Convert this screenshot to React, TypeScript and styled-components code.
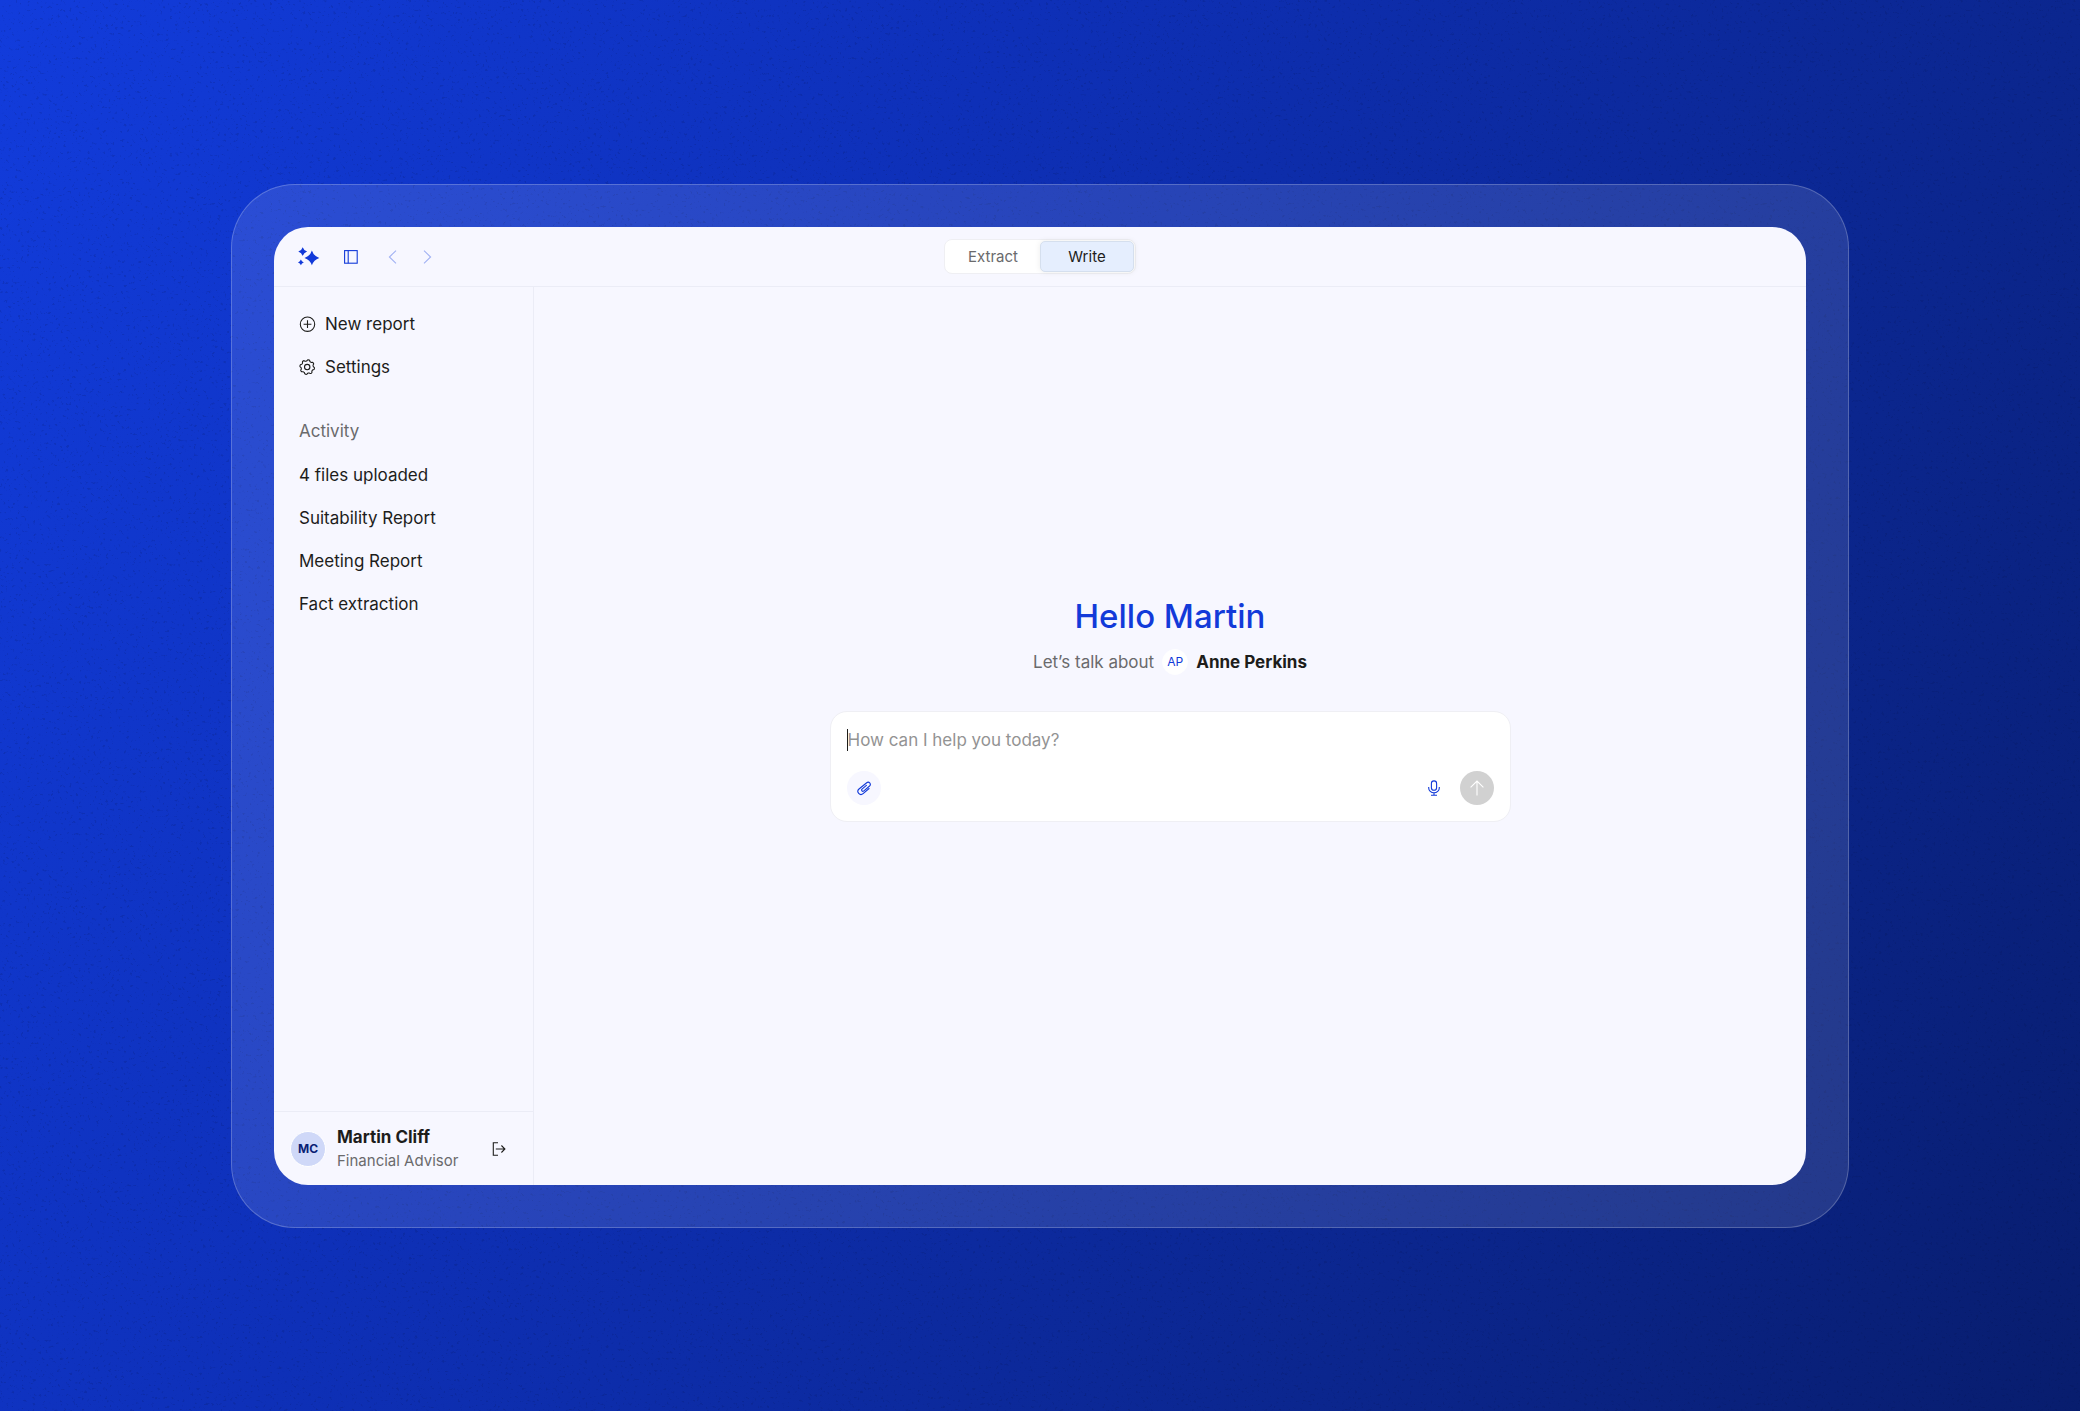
import React from "react";
import styled, { createGlobalStyle, css } from "styled-components";

const color = {
  brand: "#123ad9",
  brandSoft: "#a2b2f3",
  surface: "#f7f7ff",
  line: "#ebecf6",
  ink: "#1d1d1b",
  muted: "#6a6a6c",
  placeholder: "#939393",
};

const GlobalStyle = createGlobalStyle`
  *, *::before, *::after { box-sizing: border-box; }
  body {
    margin: 0;
    font-family: Inter, "Liberation Sans", sans-serif;
    color: ${color.ink};
  }
  button, textarea { font: inherit; color: inherit; }
  h1, h2, p, ul { margin: 0; padding: 0; }
`;

const Backdrop = styled.div`
  position: relative;
  display: flex;
  min-height: 100vh;
  padding: 184px 231px 183px;
  background: linear-gradient(119deg, #123cdc 0%, #0e30b8 36%, #0b268e 73%, #081d6e 100%);
`;

const Grain = styled.svg`
  position: absolute;
  inset: 0;
  width: 100%;
  height: 100%;
  pointer-events: none;
`;

const Frame = styled.div`
  position: relative;
  display: flex;
  flex: 1;
  min-width: 0;
  padding: 42px;
  border: 1px solid rgba(255, 255, 255, 0.22);
  border-radius: 64px;
  background: rgba(255, 255, 255, 0.11);
`;

const Window = styled.div`
  display: flex;
  flex: 1;
  flex-direction: column;
  min-width: 0;
  overflow: hidden;
  border-radius: 34px;
  background: ${color.surface};
`;

const TopBar = styled.header`
  display: grid;
  grid-template-columns: 1fr auto 1fr;
  align-items: center;
  height: 60px;
  padding: 0 24px;
  border-bottom: 1px solid ${color.line};
`;

const Tools = styled.div`
  display: flex;
  align-items: center;
  gap: 24px;
`;

const IconButton = styled.button<{ $tone?: string }>`
  display: inline-flex;
  align-items: center;
  justify-content: center;
  padding: 0;
  border: 0;
  background: none;
  color: ${(p) => p.$tone ?? color.brand};
  cursor: pointer;
`;

const Arrows = styled.div`
  display: flex;
  gap: 16px;
  padding-left: 1px;
`;

const Segments = styled.div`
  display: flex;
  padding: 1px;
  border: 1px solid #efeff3;
  border-radius: 8px;
  background: #fff;
`;

const Segment = styled.button<{ $active?: boolean }>`
  width: 94px;
  height: 31px;
  padding: 0;
  border: 1px solid transparent;
  border-radius: 5px;
  background: none;
  font-size: 15px;
  line-height: 20px;
  color: ${color.muted};
  cursor: pointer;
  ${(p) =>
    p.$active &&
    css`
      border-color: #d5dfee;
      background: #e5eefe;
      color: ${color.ink};
      box-shadow: 0 0 6px rgba(0, 0, 0, 0.08);
    `}
`;

const Body = styled.div`
  display: flex;
  flex: 1;
  min-height: 0;
`;

const Sidebar = styled.aside`
  display: flex;
  flex: 0 0 260px;
  flex-direction: column;
  border-right: 1px solid ${color.line};
`;

const Nav = styled.nav`
  display: flex;
  flex: 1;
  flex-direction: column;
  gap: 22px;
  padding: 15px 25px;
`;

const NavList = styled.ul`
  list-style: none;
`;

const NavLink = styled.a`
  display: flex;
  align-items: center;
  gap: 9px;
  height: 43px;
  font-size: 17px;
  line-height: 24px;
  color: ${color.ink};
  text-decoration: none;
`;

const NavHeading = styled.h2`
  height: 43px;
  font-size: 17px;
  font-weight: 400;
  line-height: 43px;
  color: ${color.muted};
`;

const Account = styled.footer`
  display: flex;
  align-items: center;
  gap: 11px;
  height: 74px;
  padding: 0 27px 0 16px;
  border-top: 1px solid ${color.line};
`;

const Avatar = styled.span<{ $small?: boolean }>`
  display: inline-flex;
  align-items: center;
  justify-content: center;
  width: ${(p) => (p.$small ? 26 : 36)}px;
  height: ${(p) => (p.$small ? 26 : 36)}px;
  border: 1px solid #fff;
  border-radius: 50%;
  background: ${(p) => (p.$small ? "#fff" : "#cfd8f8")};
  font-size: 12px;
  font-weight: ${(p) => (p.$small ? 400 : 700)};
  color: ${(p) => (p.$small ? color.brand : "#0a1f75")};
`;

const Person = styled.div`
  flex: 1;
`;

const Name = styled.p`
  font-size: 17px;
  font-weight: 700;
  line-height: 24px;
`;

const Role = styled.p`
  font-size: 15px;
  line-height: 24px;
  color: ${color.muted};
`;

const Main = styled.main`
  display: flex;
  flex: 1;
  flex-direction: column;
  align-items: center;
  justify-content: center;
  min-width: 0;
  padding: 0 24px 56px;
`;

const Greeting = styled.h1`
  font-size: 33px;
  font-weight: 500;
  line-height: 44px;
  color: ${color.brand};
`;

const Subject = styled.div`
  display: flex;
  align-items: center;
  gap: 8px;
  height: 26px;
  margin: 11px 0 36px;
  font-size: 17px;
  line-height: 24px;
  color: ${color.muted};
`;

const Client = styled.strong`
  font-weight: 700;
  color: ${color.ink};
`;

const Composer = styled.form`
  display: flex;
  flex-direction: column;
  gap: 19px;
  width: 100%;
  max-width: 681px;
  padding: 16px;
  border: 1px solid #efeff4;
  border-radius: 17px;
  background: #fff;
`;

const Field = styled.div`
  position: relative;
  display: flex;
`;

const Caret = styled.span`
  position: absolute;
  top: 1px;
  left: 0;
  width: 1px;
  height: 22px;
  background: ${color.ink};
`;

const Prompt = styled.textarea`
  flex: 1;
  height: 24px;
  padding: 0 1px;
  border: 0;
  outline: 0;
  resize: none;
  overflow: hidden;
  background: none;
  font-size: 17px;
  line-height: 24px;
  &::placeholder {
    color: ${color.placeholder};
    opacity: 1;
  }
`;

const Actions = styled.div`
  display: flex;
  align-items: center;
  justify-content: space-between;
`;

const ActionGroup = styled.div`
  display: flex;
  align-items: center;
  gap: 18px;
`;

const RoundButton = styled(IconButton)<{ $fill: string }>`
  width: 34px;
  height: 34px;
  border-radius: 50%;
  background: ${(p) => p.$fill};
`;

const star = (x: number, y: number, r: number) => {
  const c = r * 0.24;
  return `M${x} ${y - r}Q${x + c} ${y - c} ${x + r} ${y}Q${x + c} ${y + c} ${x} ${y + r}Q${x - c} ${y + c} ${x - r} ${y}Q${x - c} ${y - c} ${x} ${y - r}Z`;
};

const SparkleIcon = () => (
  <svg width="22" height="20" viewBox="0 0 22 20" fill="currentColor" aria-hidden="true">
    <path d={star(13.9, 10.9, 7.4)} />
    <path d={star(4.7, 4.6, 4.4)} />
    <path d={star(2.9, 15.4, 2.9)} />
  </svg>
);

const PanelIcon = () => (
  <svg width="14" height="14" viewBox="0 0 14 14" fill="none" stroke="currentColor" aria-hidden="true">
    <rect x="0.6" y="0.6" width="12.6" height="12.6" strokeWidth="1.1" />
    <path d="M4.2 0.6V13.2" strokeWidth="1.1" />
  </svg>
);

const ChevronIcon = ({ flip }: { flip?: boolean }) => (
  <svg width="19" height="16" viewBox="0 0 19 16" fill="none" stroke="currentColor" strokeWidth="1.1" aria-hidden="true">
    <path d={flip ? "M6 1.6L12.6 8L6 14.4" : "M13 1.6L6.4 8L13 14.4"} />
  </svg>
);

const PlusCircleIcon = () => (
  <svg width="17" height="17" viewBox="0 0 17 17" fill="none" stroke="currentColor" strokeWidth="1.1" aria-hidden="true">
    <circle cx="8.5" cy="9.2" r="7.2" />
    <path d="M8.5 5.3v7.8M4.6 9.2h7.8" />
  </svg>
);

const gearPath = (() => {
  const points: string[] = [];
  for (let i = 0; i <= 96; i++) {
    const a = (i / 96) * Math.PI * 2;
    const r = 6.7 + 0.65 * Math.tanh(2 * Math.cos(8 * a));
    points.push(`${(8.2 + r * Math.cos(a + 0.2)).toFixed(2)} ${(9.1 + r * Math.sin(a + 0.2)).toFixed(2)}`);
  }
  return `M${points.join("L")}Z`;
})();

const GearIcon = () => (
  <svg width="17" height="17" viewBox="0 0 17 17" fill="none" stroke="currentColor" strokeWidth="1.1" aria-hidden="true">
    <path d={gearPath} strokeLinejoin="round" />
    <circle cx="8.2" cy="9.1" r="2.7" />
  </svg>
);

const LogoutIcon = () => (
  <svg width="14" height="14" viewBox="0 0 14 14" fill="none" stroke="currentColor" strokeWidth="1.1" aria-hidden="true">
    <path d="M6 0.8H1.3V13.2H6M3.8 7H12.8M9.4 3.5L12.9 7L9.4 10.5" />
  </svg>
);

const PaperclipIcon = () => (
  <svg width="16" height="16" viewBox="0 0 16 16" fill="none" stroke="currentColor" strokeWidth="1.1" strokeLinecap="round" aria-hidden="true">
    <path d="M10.4 5.4L6 9.2a1.25 1.25 0 0 0 1.6 1.9l6-5.1a2.2 2.2 0 0 0-2.9-3.3L3 9a3.1 3.1 0 0 0 4.1 4.7l6-5.2" />
  </svg>
);

const MicIcon = () => (
  <svg width="16" height="16" viewBox="0 0 16 16" fill="none" stroke="currentColor" strokeWidth="1.1" aria-hidden="true">
    <rect x="5.4" y="0.9" width="5.2" height="9.4" rx="2.6" />
    <path d="M2.7 7v0.9a5.3 4.9 0 0 0 10.6 0V7M8 12.8v2.4M5 15.2h6" />
  </svg>
);

const ArrowUpIcon = () => (
  <svg width="16" height="16" viewBox="0 0 16 16" fill="none" stroke="currentColor" strokeWidth="1.1" aria-hidden="true">
    <path d="M8 15.4V1.2M1.6 7.4L8 1L14.4 7.4" />
  </svg>
);

const activity = ["4 files uploaded", "Suitability Report", "Meeting Report", "Fact extraction"];

export default function App() {
  return (
    <>
      <GlobalStyle />
      <Backdrop>
        <Grain aria-hidden="true">
          <filter id="grain" colorInterpolationFilters="sRGB">
            <feTurbulence type="fractalNoise" baseFrequency="0.33" numOctaves="2" seed="7" />
            <feColorMatrix values="0 0 0 0 0.02  0 0 0 0 0.06  0 0 0 0 0.26  -9 0 0 0 3.2" />
          </filter>
          <rect width="100%" height="100%" filter="url(#grain)" opacity="0.14" />
        </Grain>
        <Frame>
          <Window>
            <TopBar>
              <Tools>
                <IconButton type="button" aria-label="Assistant"><SparkleIcon /></IconButton>
                <IconButton type="button" aria-label="Toggle sidebar"><PanelIcon /></IconButton>
                <Arrows>
                  <IconButton type="button" aria-label="Back" $tone={color.brandSoft}><ChevronIcon /></IconButton>
                  <IconButton type="button" aria-label="Forward" $tone={color.brandSoft}><ChevronIcon flip /></IconButton>
                </Arrows>
              </Tools>
              <Segments>
                <Segment type="button" aria-pressed={false}>Extract</Segment>
                <Segment type="button" aria-pressed $active>Write</Segment>
              </Segments>
            </TopBar>
            <Body>
              <Sidebar>
                <Nav>
                  <NavList>
                    <li><NavLink href="#new"><PlusCircleIcon />New report</NavLink></li>
                    <li><NavLink href="#settings"><GearIcon />Settings</NavLink></li>
                  </NavList>
                  <section>
                    <NavHeading>Activity</NavHeading>
                    <NavList>
                      {activity.map((item) => (
                        <li key={item}><NavLink href="#activity">{item}</NavLink></li>
                      ))}
                    </NavList>
                  </section>
                </Nav>
                <Account>
                  <Avatar>MC</Avatar>
                  <Person>
                    <Name>Martin Cliff</Name>
                    <Role>Financial Advisor</Role>
                  </Person>
                  <IconButton type="button" aria-label="Log out" $tone={color.ink}><LogoutIcon /></IconButton>
                </Account>
              </Sidebar>
              <Main>
                <Greeting>Hello Martin</Greeting>
                <Subject>
                  <span>Let’s talk about</span>
                  <Avatar $small>AP</Avatar>
                  <Client>Anne Perkins</Client>
                </Subject>
                <Composer onSubmit={(e) => e.preventDefault()}>
                  <Field>
                    <Prompt rows={1} aria-label="Message" placeholder="How can I help you today?" />
                    <Caret />
                  </Field>
                  <Actions>
                    <RoundButton type="button" aria-label="Attach a file" $fill={color.surface}><PaperclipIcon /></RoundButton>
                    <ActionGroup>
                      <IconButton type="button" aria-label="Dictate"><MicIcon /></IconButton>
                      <RoundButton type="submit" aria-label="Send" $fill="#d1d1d1" $tone="#fff"><ArrowUpIcon /></RoundButton>
                    </ActionGroup>
                  </Actions>
                </Composer>
              </Main>
            </Body>
          </Window>
        </Frame>
      </Backdrop>
    </>
  );
}
